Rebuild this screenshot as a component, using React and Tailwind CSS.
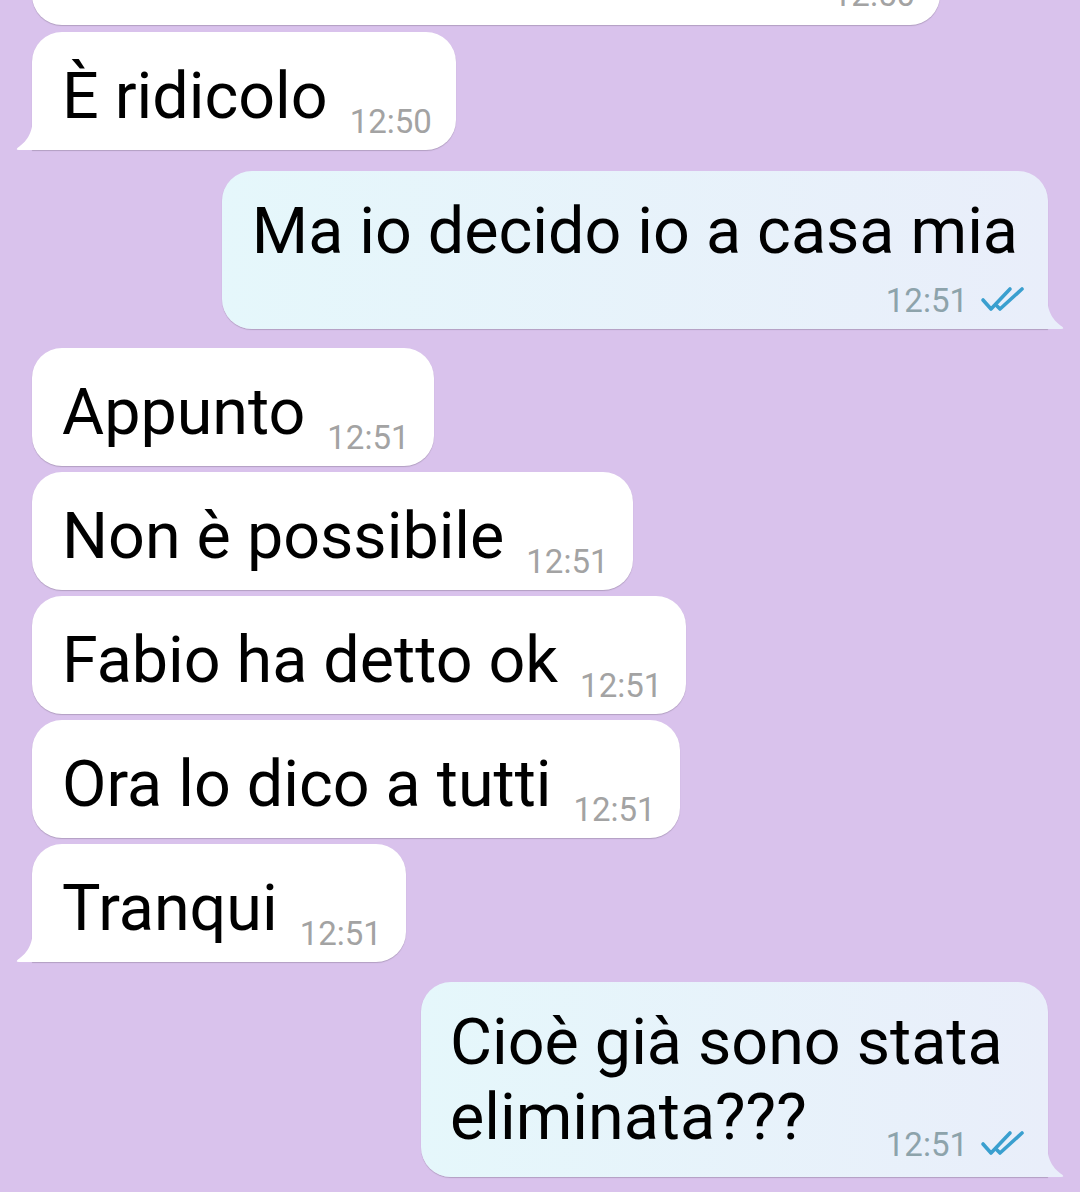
import React from 'react'

const font = { fontFamily: 'Roboto, "Noto Sans", sans-serif' }

function TailLeft() {
  return (
    <svg className="absolute bottom-0 left-[-16px]" width="18" height="34" viewBox="0 0 18 34">
      <path d="M17 0 L18 0 L18 34 L3 34 Q-1 34 2 31.5 C10 26 17 18 17 0 Z" fill="#ffffff" />
    </svg>
  )
}

function TailRight({ color }) {
  return (
    <svg className="absolute bottom-0 right-[-16px]" width="18" height="34" viewBox="0 0 18 34">
      <path d="M1 0 L0 0 L0 34 L15 34 Q19 34 16 31.5 C8 26 1 18 1 0 Z" fill={color} />
    </svg>
  )
}

function Checks() {
  return (
    <svg width="48" height="28" viewBox="0 0 48 28" className="ml-[12px] mb-[4px]">
      <path d="M3 15 L11 24 L30 4" fill="none" stroke="#3a9fcf" strokeWidth="3.6" strokeLinecap="round" strokeLinejoin="round" />
      <path d="M17 21 L20 24 L42 4" fill="none" stroke="#3a9fcf" strokeWidth="3.6" strokeLinecap="round" strokeLinejoin="round" />
    </svg>
  )
}

function Received({ text, time, tail }) {
  return (
    <div
      className={`relative self-start ml-[32px] flex h-[118px] items-end bg-white pl-[30px] pr-[24px] shadow-[0_1px_1px_rgba(0,0,0,0.18)] ${
        tail ? 'rounded-[30px] rounded-bl-none' : 'rounded-[30px]'
      }`}
    >
      {tail && <TailLeft />}
      <span className="mb-[21px] text-[64.6px] leading-none text-black">{text}</span>
      <span className="mb-[12px] ml-[22px] text-[33px] leading-none text-[#a3a3a3]">{time}</span>
    </div>
  )
}

export default function App() {
  return (
    <div className="h-[1192px] w-[1080px] overflow-hidden bg-[#d9c2ec]" style={font}>
      <div className="flex flex-col">
        <div className="-mt-[35px] mr-[140px] ml-[32px] flex h-[60px] items-end justify-end rounded-[30px] bg-white pr-[25px] shadow-[0_1px_1px_rgba(0,0,0,0.18)]">
          <span className="mb-[14px] text-[33px] leading-none text-[#a3a3a3]">12:50</span>
        </div>

        <div className="mt-[7px] flex flex-col">
          <Received text="È ridicolo" time="12:50" tail />
        </div>

        <div className="relative mt-[21px] mr-[32px] self-end rounded-[30px] rounded-br-none bg-gradient-to-r from-[#e5f7fb] to-[#e9eefa] px-[30px] pt-[28px] pb-[12px] shadow-[0_1px_1px_rgba(0,0,0,0.18)]">
          <TailRight color="#e9eefa" />
          <div className="text-[64.6px] leading-none text-black">Ma io decido io a casa mia</div>
          <div className="-mr-[10px] mt-[20px] flex items-end justify-end">
            <span className="text-[33px] leading-none text-[#8da3ab]">12:51</span>
            <Checks />
          </div>
        </div>

        <div className="mt-[19px] flex flex-col gap-[6px]">
          <Received text="Appunto" time="12:51" />
          <Received text="Non è possibile" time="12:51" />
          <Received text="Fabio ha detto ok" time="12:51" />
          <Received text="Ora lo dico a tutti" time="12:51" />
          <Received text="Tranqui" time="12:51" tail />
        </div>

        <div className="relative mt-[20px] mr-[32px] w-[627px] self-end rounded-[30px] rounded-br-none bg-gradient-to-r from-[#e5f7fb] to-[#e9eefa] pl-[29px] pr-[20px] pt-[23px] pb-[16px] shadow-[0_1px_1px_rgba(0,0,0,0.18)]">
          <TailRight color="#e9eefa" />
          <div className="text-[64.6px] leading-[75px] text-black">Cioè già sono stata</div>
          <div className="flex items-end justify-between">
            <span className="mb-[6px] text-[64.6px] leading-[75px] text-black">eliminata???</span>
            <div className="flex items-end">
              <span className="text-[33px] leading-none text-[#8da3ab]">12:51</span>
              <Checks />
            </div>
          </div>
        </div>
      </div>
    </div>
  )
}
